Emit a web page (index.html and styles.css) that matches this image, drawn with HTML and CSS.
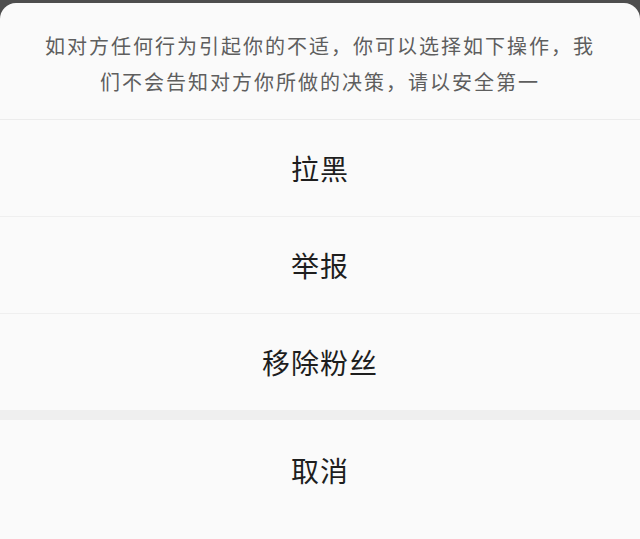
FILE: index.html
```html
<!DOCTYPE html>
<html lang="zh-CN">
<head>
<meta charset="UTF-8">
<meta name="viewport" content="width=device-width, initial-scale=1.0">
<title>操作</title>
<link rel="stylesheet" href="styles.css">
</head>
<body>
    <div class="backdrop"></div>
    <div class="sheet">
        <div class="sheet-tip">
            <p>如对方任何行为引起你的不适，你可以选择如下操作，我</p>
            <p>们不会告知对方你所做的决策，请以安全第一</p>
        </div>
        <ul class="actions">
            <li class="action">拉黑</li>
            <li class="action">举报</li>
            <li class="action">移除粉丝</li>
        </ul>
        <div class="gap"></div>
        <div class="action cancel">取消</div>
    </div>
</body>
</html>
```

FILE: styles.css
```css
body {
    margin: 0;
    padding: 0;
    background-color: #4e4e4e;
    font-family: "Noto Sans CJK SC", "Noto Sans", sans-serif;
    height: 539px;
    overflow: hidden;
}

.backdrop {
    height: 3px;
    background-color: #4e4e4e;
}

.sheet {
    background-color: #fafafa;
    border-radius: 16px 16px 0 0;
    height: 536px;
    overflow: hidden;
}

.sheet-tip {
    padding: 25px 0 19px;
    text-align: center;
    color: #5e5e5e;
    font-size: 20px;
    line-height: 36px;
    letter-spacing: 2px;
    border-bottom: 1px solid #ececec;
}

.sheet-tip p {
    margin: 0;
}

.actions {
    list-style: none;
    margin: 0;
    padding: 0;
}

.action {
    height: 96px;
    display: flex;
    align-items: center;
    justify-content: center;
    font-size: 28px;
    letter-spacing: 1px;
    color: #1e1e1e;
    border-bottom: 1px solid #efefef;
}

.actions .action:last-child {
    border-bottom: none;
}

.gap {
    height: 10px;
    background-color: #efefef;
}

.cancel {
    height: 100px;
    border-bottom: none;
}
```
